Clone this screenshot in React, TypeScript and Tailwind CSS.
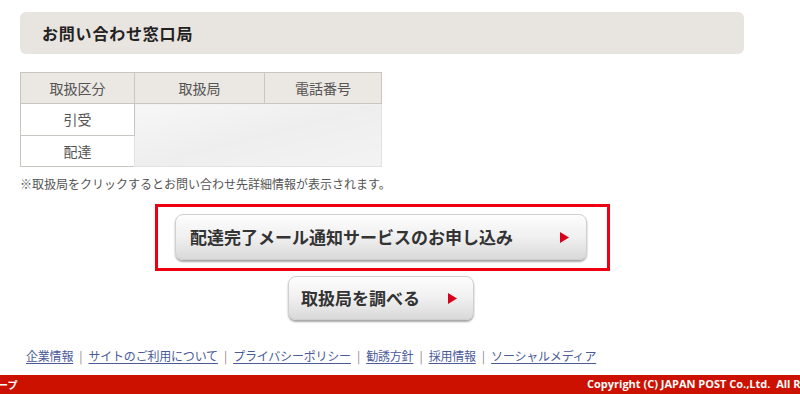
import React from "react";

const JP = "font-['Noto_Sans_CJK_JP','Noto_Sans',sans-serif]";

function Arrow() {
  return (
    <svg width="9" height="11" viewBox="0 0 9 11" className="shrink-0">
      <polygon points="0,0 9,5.5 0,11" fill="#d7001b" />
    </svg>
  );
}

const LINKS = ["企業情報", "サイトのご利用について", "プライバシーポリシー", "勧誘方針", "採用情報", "ソーシャルメディア"];

export default function App() {
  return (
    <div className={`relative w-[800px] h-[394px] overflow-hidden bg-white ${JP}`}>
      {/* ── Section title ───────────────────────────── */}
      <div className="ml-[20px] mt-[12px] w-[724px] h-[42px] rounded-[6px] bg-[#e8e4df] flex items-center pl-[22px]">
        <h2 className="text-[16px] font-bold text-[#222] tracking-[0.8px]">お問い合わせ窓口局</h2>
      </div>

      {/* ── Table ───────────────────────────────────── */}
      <table className="ml-[20px] mt-[18px] w-[362px] border-collapse text-[14px] text-[#555]">
        <tbody>
          <tr className="h-[31px] bg-[#ebe7e3]">
            <td className="w-[114px] border border-[#c9c5c1] text-center">取扱区分</td>
            <td className="w-[130px] border border-[#c9c5c1] text-center">取扱局</td>
            <td className="border border-[#c9c5c1] text-center">電話番号</td>
          </tr>
          <tr className="h-[32px]">
            <td className="border border-[#c9c5c1] text-center">引受</td>
            <td
              colSpan={2}
              rowSpan={2}
              className="border-l border-r border-b border-[#e2e2e2] bg-gradient-to-br from-[#f7f7f7] via-[#eeeeee] to-[#f3f3f3]"
            />
          </tr>
          <tr className="h-[31px]">
            <td className="border border-[#c9c5c1] text-center">配達</td>
          </tr>
        </tbody>
      </table>

      <p className="ml-[20px] mt-[9px] text-[12px] leading-[16px] text-[#555]">
        ※取扱局をクリックするとお問い合わせ先詳細情報が表示されます。
      </p>

      {/* ── Buttons ─────────────────────────────────── */}
      <div className="flex flex-col items-start">
        <div className="ml-[155px] mt-[12px] w-[455px] h-[67px] border-[3px] border-[#ee0011] pt-[7px] pl-[17px]">
          <div className="w-[412px] h-[46px] rounded-[8px] border border-[#cfcfcf] bg-gradient-to-b from-[#fdfdfd] via-[#f0f0f0] to-[#d9d9d9] shadow-[0_2px_2px_rgba(0,0,0,0.35)] flex items-center justify-between pl-[14px] pr-[17px]">
            <span className="text-[17px] font-bold text-[#333]">配達完了メール通知サービスのお申し込み</span>
            <Arrow />
          </div>
        </div>
        <div className="ml-[288px] mt-[5px] w-[186px] h-[44px] rounded-[8px] border border-[#cfcfcf] bg-gradient-to-b from-[#fdfdfd] via-[#f0f0f0] to-[#d9d9d9] shadow-[0_2px_2px_rgba(0,0,0,0.35)] flex items-center justify-between pl-[12px] pr-[16px]">
          <span className="text-[17px] font-bold text-[#333]">取扱局を調べる</span>
          <Arrow />
        </div>
      </div>

      {/* ── Footer links ────────────────────────────── */}
      <div className="ml-[26px] mt-[28px] flex items-center text-[12px] leading-[16px] text-[#4a5a9a]">
        {LINKS.map((l, i) => (
          <React.Fragment key={l}>
            {i > 0 && <span className="mx-[6px] text-[#888]">|</span>}
            <span className="underline underline-offset-2 tracking-[-0.2px]">{l}</span>
          </React.Fragment>
        ))}
      </div>

      {/* ── Red bar ─────────────────────────────────── */}
      <div className="absolute left-0 bottom-0 w-full h-[19px] bg-[#cc1100] flex items-center text-white font-bold text-[10px]">
        <span className="-ml-[2px]">ープ</span>
        <span className="font-['Open_Sans',sans-serif] text-[11px] whitespace-nowrap pl-[587px] absolute left-0">
          Copyright (C) JAPAN POST Co.,Ltd.&nbsp;&nbsp;All Rights Reserved.
        </span>
      </div>
    </div>
  );
}
